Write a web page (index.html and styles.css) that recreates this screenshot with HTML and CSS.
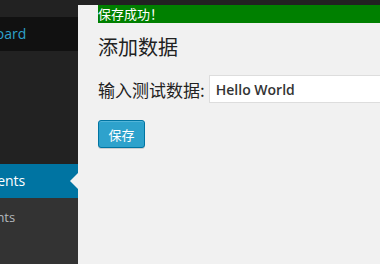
FILE: index.html
```html
<!DOCTYPE html>
<html lang="zh-CN">
<head>
    <meta charset="UTF-8">
    <meta name="viewport" content="width=device-width, initial-scale=1.0">
    <title>添加数据</title>
    <link rel="stylesheet" href="styles.css">
</head>
<body>
    <div class="adminbar"></div>
    <div class="wrap">
        <div class="sidebar">
            <div class="menu-gap"></div>
            <div class="menu-item dashboard">Dashboard</div>
            <div class="menu-space"></div>
            <div class="menu-item current">Comments<span class="arrow"></span></div>
            <div class="submenu">
                <div class="sub-item">Comments</div>
            </div>
        </div>
        <div class="content">
            <div class="notice">保存成功！</div>
            <h2>添加数据</h2>
            <form class="row" onsubmit="return false">
                <label for="test-data">输入测试数据:</label>
                <input type="text" id="test-data" value="Hello World">
            </form>
            <button class="button">保存</button>
        </div>
    </div>
</body>
</html>
```

FILE: styles.css
```css
body {
    margin: 0;
    padding: 0;
    background: #f1f1f1;
    font-family: "Noto Sans CJK SC", "Open Sans", sans-serif;
    overflow: hidden;
    height: 264px;
}
.adminbar {
    height: 5px;
    background: #222;
}
.wrap {
    display: flex;
    height: 259px;
}
.sidebar {
    width: 78px;
    flex-shrink: 0;
    background: #222;
    display: flex;
    flex-direction: column;
    overflow: hidden;
    font-family: "Open Sans", sans-serif;
}
.menu-gap {
    height: 12px;
}
.menu-item {
    height: 34px;
    line-height: 34px;
    font-size: 14px;
    white-space: nowrap;
    position: relative;
}
.dashboard {
    background: #111;
    color: #2ea2cc;
    text-indent: -46px;
}
.menu-space {
    height: 113px;
}
.current {
    background: #0074a2;
    color: #fff;
    text-indent: -46px;
}
.arrow {
    position: absolute;
    right: 0;
    top: 9px;
    width: 0;
    height: 0;
    border-top: 8px solid transparent;
    border-bottom: 8px solid transparent;
    border-right: 8px solid #f1f1f1;
}
.submenu {
    flex: 1;
    background: #333;
    padding-top: 9px;
}
.sub-item {
    font-size: 13px;
    line-height: 20px;
    color: #b4b9be;
    white-space: nowrap;
    text-indent: -51px;
}
.content {
    flex: 1;
    padding-left: 20px;
    overflow: hidden;
}
.notice {
    background: #008000;
    color: #fff;
    font-size: 13px;
    line-height: 18px;
}
h2 {
    margin: 12px 0 0;
    font-size: 20px;
    line-height: 24px;
    font-weight: normal;
    color: #222;
}
.row {
    display: flex;
    align-items: center;
    margin: 16px 0 0;
    white-space: nowrap;
}
label {
    font-size: 17px;
    color: #222;
    margin-right: 4px;
}
input[type="text"] {
    flex-shrink: 0;
    width: 300px;
    height: 28px;
    box-sizing: border-box;
    border: 1px solid #ddd;
    background: #fff;
    padding: 0 6px;
    font-family: "Open Sans", sans-serif;
    font-size: 14px;
    font-weight: 600;
    color: #333;
    outline: none;
}
.button {
    display: block;
    margin-top: 17px;
    width: 47px;
    height: 28px;
    padding: 0;
    background: #2ea2cc;
    border: 1px solid #0074a2;
    border-radius: 3px;
    box-shadow: inset 0 1px 0 rgba(120, 200, 230, 0.5), 0 1px 0 rgba(0, 0, 0, 0.15);
    color: #fff;
    font-family: "Noto Sans CJK SC", sans-serif;
    font-size: 13px;
    cursor: pointer;
}
```
